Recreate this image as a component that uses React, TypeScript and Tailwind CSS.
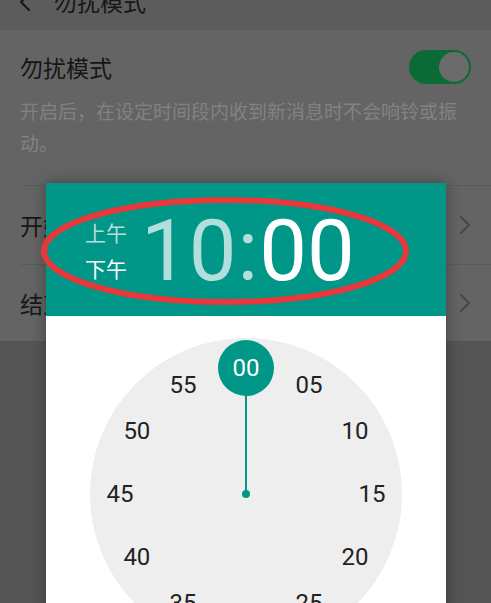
import React from 'react';

const CJK = '"Noto Sans CJK SC", "Noto Sans", sans-serif';
const ROBOTO = 'Roboto, "Noto Sans", sans-serif';

const MINUTES = ['00', '05', '10', '15', '20', '25', '30', '35', '40', '45', '50', '55'];

function Chevron() {
  return (
    <svg width="12" height="20" viewBox="0 0 12 20" fill="none" stroke="#454545" strokeWidth={1.8} strokeLinecap="round" strokeLinejoin="round">
      <path d="M2 2l8 8-8 8" />
    </svg>
  );
}

function Clock() {
  const R = 156;
  const r = 126;
  return (
    <div className="relative mx-auto mt-[22px] h-[312px] w-[312px] rounded-full bg-[#eeeeee]">
      {/* hand */}
      <div className="absolute left-[155px] top-[56px] h-[100px] w-[2px] bg-[#009688]" />
      <div className="absolute left-[152px] top-[152px] h-[8px] w-[8px] rounded-full bg-[#009688]" />
      <div className="absolute left-[128px] top-[2px] h-[56px] w-[56px] rounded-full bg-[#009688]" />
      {MINUTES.map((m, i) => {
        const a = (i * 30 * Math.PI) / 180;
        const x = R + r * Math.sin(a);
        const y = R - r * Math.cos(a);
        return (
          <span
            key={m}
            className={`absolute flex h-[30px] w-[40px] items-center justify-center text-[24px] leading-none ${i === 0 ? 'text-white' : 'text-[#222222]'}`}
            style={{ left: x - 20, top: y - 15, fontFamily: ROBOTO }}
          >
            {m}
          </span>
        );
      })}
    </div>
  );
}

export default function App() {
  return (
    <div className="relative h-[603px] w-[491px] overflow-hidden bg-[#555555]" style={{ fontFamily: CJK }}>
      {/* toolbar, scrolled partly off the top */}
      <div className="-mt-[27px] flex h-[57px] items-center bg-[#5c5c5c] pl-[18px]">
        <svg width="14" height="22" viewBox="0 0 14 22" fill="none" stroke="#161616" strokeWidth={2} strokeLinecap="round" strokeLinejoin="round">
          <path d="M11 3l-8 8 8 8" />
        </svg>
        <span className="ml-[22px] text-[23px] text-[#161616]">勿扰模式</span>
      </div>

      {/* settings list */}
      <div className="bg-[#646464]">
        <div className="px-[20px] pb-[26px] pt-[20px]">
          <div className="flex items-center justify-between">
            <span className="text-[23px] leading-[32px] text-[#161616]">勿扰模式</span>
            <div className="flex h-[34px] w-[62px] items-center justify-end rounded-full bg-[#0b6b37] pr-[2px]">
              <div className="h-[30px] w-[30px] rounded-full bg-[#6b6b6b]" />
            </div>
          </div>
          <p className="mt-[11px] text-[19px] leading-[32px] text-[#828282]">
            开启后，在设定时间段内收到新消息时不会响铃或振动。
          </p>
        </div>
        <div className="ml-[20px] border-t border-[#5b5b5b]">
          <div className="flex h-[78px] items-center justify-between pr-[20px]">
            <span className="text-[23px] text-[#161616]">开始时间</span>
            <Chevron />
          </div>
          <div className="flex h-[77px] items-center justify-between border-t border-[#5b5b5b] pr-[20px]">
            <span className="text-[23px] text-[#161616]">结束时间</span>
            <Chevron />
          </div>
        </div>
      </div>

      {/* time picker dialog */}
      <div className="absolute left-[46px] top-[183px] w-[400px] bg-white shadow-[0_0_14px_rgba(0,0,0,0.35)]">
        <div className="flex h-[133px] items-center bg-[#009688] pl-[39px]">
          <div className="flex flex-col gap-[12px] text-[21px] leading-[24px]">
            <span className="text-[#b2dfdb]">上午</span>
            <span className="text-white">下午</span>
          </div>
          <div className="ml-[14px] mt-[4px] flex text-[85px] leading-none" style={{ fontFamily: ROBOTO }}>
            <span className="text-[#b2dfdb]">10</span>
            <span className="mx-[1px] text-[#b2dfdb]">:</span>
            <span className="text-white">00</span>
          </div>
        </div>
        <div className="h-[320px]">
          <Clock />
        </div>
      </div>

      {/* red annotation ellipse */}
      <svg className="pointer-events-none absolute left-0 top-0" width="491" height="603">
        <ellipse cx="225" cy="251" rx="181" ry="51" fill="none" stroke="#e8383b" strokeWidth={6} />
      </svg>
    </div>
  );
}
